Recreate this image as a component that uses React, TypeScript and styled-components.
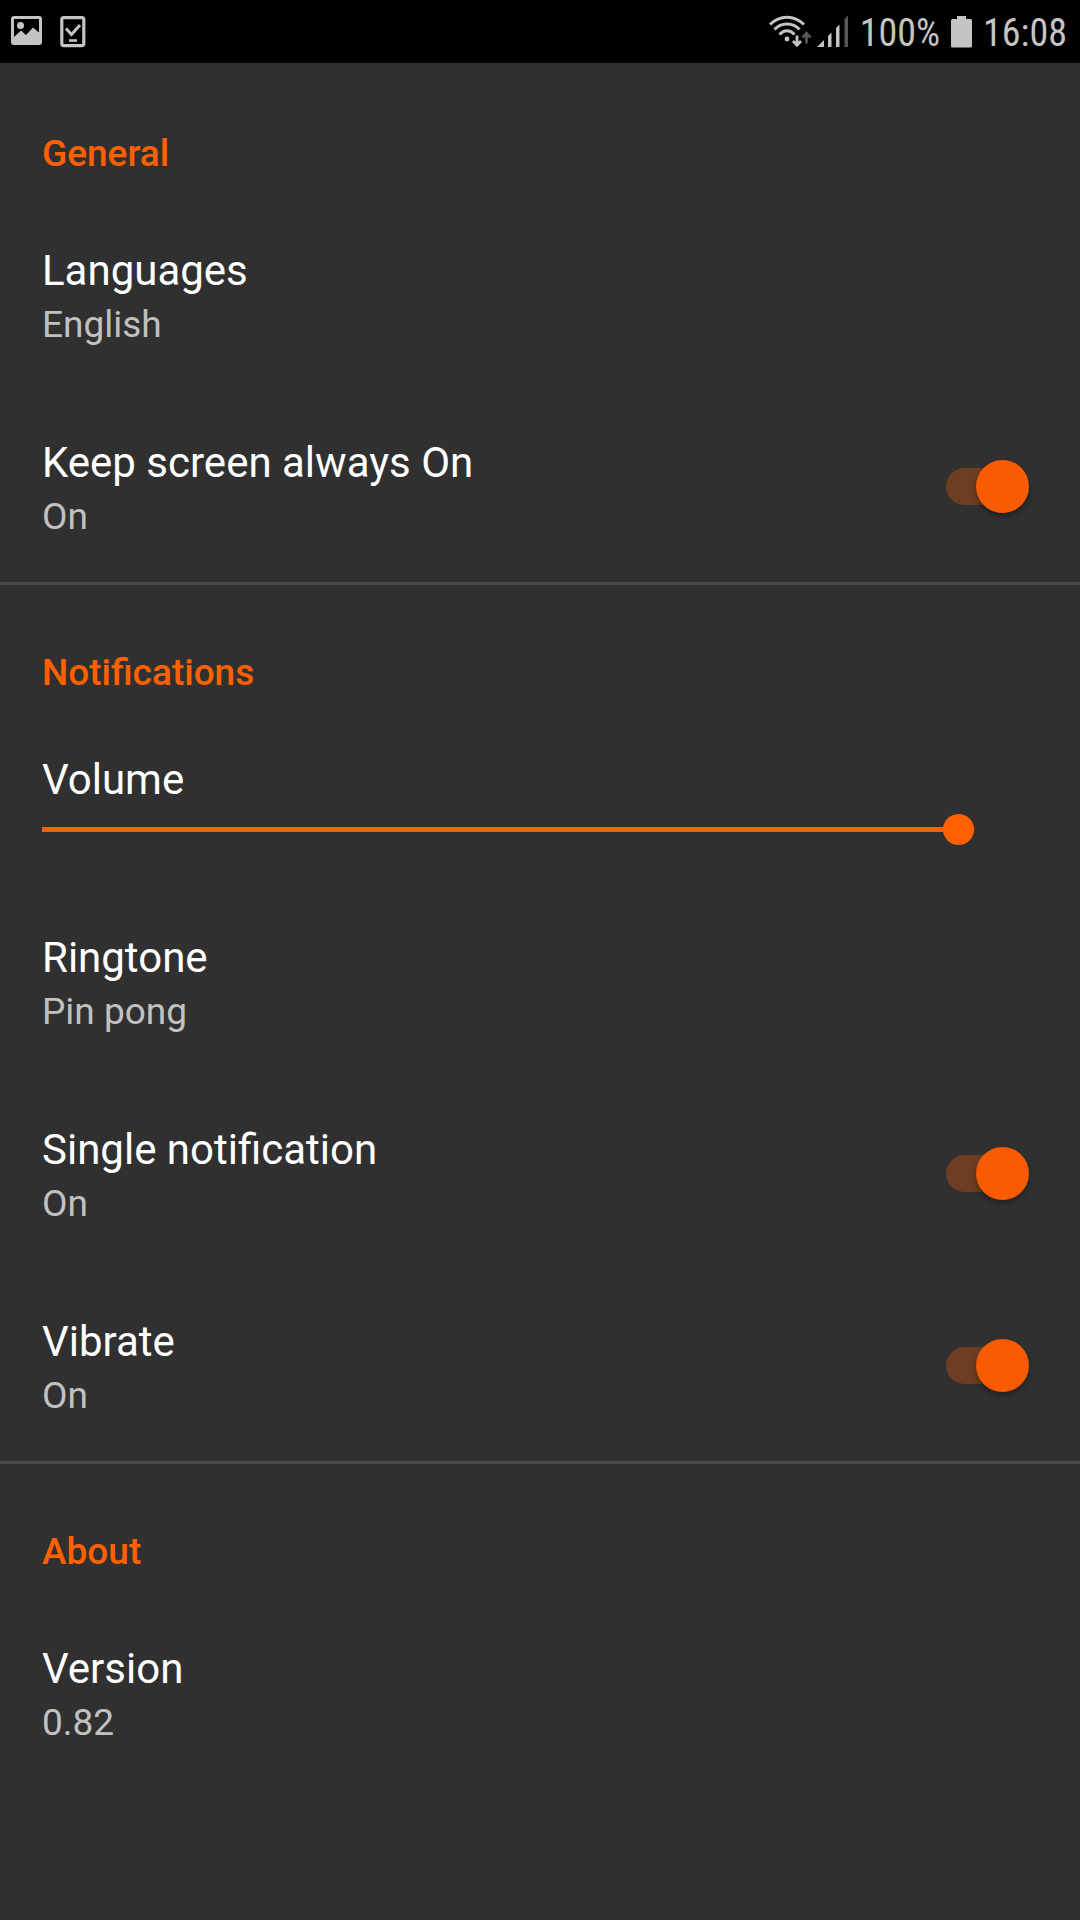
import React, { useId, useState } from "react";
import styled, { createGlobalStyle } from "styled-components";

const accent = "#ff6000";
const statusGrey = "#c4c4c4";

const GlobalStyle = createGlobalStyle`
  *, *::before, *::after { box-sizing: border-box; }
  body {
    margin: 0;
    background: #303030;
    color: #ffffff;
    font-family: Roboto, "Noto Sans", sans-serif;
  }
`;

const Page = styled.div`
  display: flex;
  flex-direction: column;
  min-height: 100vh;
  background: #303030;
`;

const StatusBar = styled.header`
  display: flex;
  align-items: center;
  justify-content: space-between;
  height: 63px;
  padding: 0 13px 0 10px;
  background: #000000;
  color: ${statusGrey};
`;

const StatusGroup = styled.div<{ $gap: number }>`
  display: flex;
  align-items: center;
  gap: ${(p) => p.$gap}px;

  svg { display: block; flex: none; }
`;

const StatusText = styled.span`
  padding-top: 2px;
  font-family: "Roboto Condensed", Roboto, sans-serif;
  font-size: 38px;
  line-height: 48px;
  white-space: nowrap;
`;

const Section = styled.section<{ $divided?: boolean }>`
  border-top: 3px solid ${(p) => (p.$divided ? "#4a4a4a" : "transparent")};
`;

const SectionTitle = styled.h2`
  margin: 0;
  padding: 64px 42px 20px;
  color: ${accent};
  font-size: 37px;
  font-weight: 500;
  line-height: 48px;
`;

const rowBase = `
  display: flex;
  width: 100%;
  border: 0;
  background: transparent;
  color: inherit;
  font: inherit;
  text-align: left;
`;

const RowButton = styled.button`
  ${rowBase}
  padding: 41px 42px;
`;

const SwitchRow = styled.label`
  ${rowBase}
  align-items: center;
  justify-content: space-between;
  padding: 41px 51px 41px 42px;
`;

const InfoRow = styled.div`
  ${rowBase}
  padding: 41px 42px;
`;

const SliderRow = styled.div`
  ${rowBase}
  flex-direction: column;
  gap: 8px;
  padding: 37px 106px 40px 42px;
`;

const RowText = styled.span`
  display: flex;
  flex-direction: column;
  gap: 4px;
  padding-top: 6px;
`;

const Title = styled.span`
  font-size: 42px;
  line-height: 52px;
`;

const Summary = styled.span`
  color: #c1c1c1;
  font-size: 37px;
  line-height: 48px;
`;

const Switch = styled.input`
  appearance: none;
  display: grid;
  align-items: center;
  flex: none;
  width: 83px;
  height: 53px;
  margin: 0;

  &::before, &::after {
    content: "";
    grid-area: 1 / 1;
  }
  &::before {
    width: 74px;
    height: 37px;
    border-radius: 19px;
    background: #6c6c6c;
  }
  &::after {
    width: 53px;
    height: 53px;
    border-radius: 50%;
    background: #bdbdbd;
    box-shadow: 0 3px 5px rgba(0, 0, 0, 0.35);
  }
  &:checked::before { background: #6d3e22; }
  &:checked::after {
    justify-self: end;
    background: #f95c00;
  }
`;

const Slider = styled.input<{ $percent: number }>`
  appearance: none;
  display: block;
  width: 100%;
  height: 31px;
  margin: 0;
  background: transparent;

  &::-webkit-slider-runnable-track {
    height: 5px;
    background: linear-gradient(
      to right,
      ${accent} ${(p) => p.$percent}%,
      #6c6c6c ${(p) => p.$percent}%
    );
  }
  &::-webkit-slider-thumb {
    appearance: none;
    width: 31px;
    height: 31px;
    margin-top: -13px;
    border-radius: 50%;
    background: ${accent};
  }
`;

function ImageIcon() {
  return (
    <svg width="32" height="32" viewBox="0 0 32 32" aria-hidden="true">
      <path
        fill="currentColor"
        fillRule="evenodd"
        d="M4 0h25a3 3 0 0 1 3 3v23a3 3 0 0 1-3 3H4a3 3 0 0 1-3-3V3a3 3 0 0 1 3-3ZM4 3v18l7-6.500 5 4.500 7-7.500 6 5V3Z"
      />
      <circle cx="10.500" cy="9.500" r="3.500" fill="currentColor" />
    </svg>
  );
}

function DeviceCheckIcon() {
  return (
    <svg width="26" height="32" viewBox="0 0 26 32" fill="none" stroke="currentColor" aria-hidden="true">
      <rect x="1.800" y="1.600" width="22" height="28" rx="2" strokeWidth="3.200" />
      <path d="M6 12.500l5.500 6L20 9" strokeWidth="3" />
      <path d="M9 24.500h8" strokeWidth="2.600" />
    </svg>
  );
}

function WifiIcon() {
  return (
    <svg width="44" height="34" viewBox="0 0 44 34" fill="none" stroke="currentColor" aria-hidden="true">
      <path d="M2 9.500C12 -.3 26 -.3 36 9.500" strokeWidth="3" />
      <path d="M6.500 14.500C13 7 25 7 31.500 14.500" strokeWidth="3" />
      <path d="M11.500 19.500C16 14.500 22 14.500 26.500 19.500" strokeWidth="3" />
      <circle cx="19" cy="24" r="2.400" fill="currentColor" stroke="none" />
      <path d="M29 20.500v9M25 26l4 4.200 4-4.200" strokeWidth="2.800" />
      <path d="M38.500 28.500V18.500M34.500 22.500l4-4.200 4 4.200" stroke="#555555" strokeWidth="2.800" />
    </svg>
  );
}

function SignalIcon() {
  return (
    <svg width="32" height="34" viewBox="0 0 32 34" fill="currentColor" aria-hidden="true">
      <path d="M0 32l7-7v7Z" />
      <path d="M11 21l3.500-3.500V32H11Z" />
      <path d="M19 13l3.500-3.500V32H19Z" />
      <path d="M27.500 4L31 .5V32h-3.500Z" fill="#555555" />
    </svg>
  );
}

function BatteryIcon() {
  return (
    <svg width="21" height="32" viewBox="0 0 21 32" fill="currentColor" aria-hidden="true">
      <path d="M6 0h9v3h4.500A1.500 1.500 0 0 1 21 4.500V30a1.500 1.500 0 0 1-1.500 1.500h-18A1.500 1.500 0 0 1 0 30V4.500A1.500 1.500 0 0 1 1.500 3H6Z" />
    </svg>
  );
}

function Labels({ title, summary }: { title: string; summary: string }) {
  return (
    <RowText>
      <Title>{title}</Title>
      <Summary>{summary}</Summary>
    </RowText>
  );
}

function SwitchSetting({ title }: { title: string }) {
  const [on, setOn] = useState(true);
  const id = useId();
  return (
    <SwitchRow htmlFor={id}>
      <Labels title={title} summary={on ? "On" : "Off"} />
      <Switch id={id} type="checkbox" role="switch" checked={on} onChange={(e) => setOn(e.target.checked)} />
    </SwitchRow>
  );
}

function SliderSetting({ title }: { title: string }) {
  const [value, setValue] = useState(100);
  const id = useId();
  return (
    <SliderRow>
      <Title as="label" htmlFor={id}>{title}</Title>
      <Slider
        id={id}
        type="range"
        min={0}
        max={100}
        value={value}
        $percent={value}
        onChange={(e) => setValue(Number(e.target.value))}
      />
    </SliderRow>
  );
}

export default function App() {
  return (
    <Page>
      <GlobalStyle />
      <StatusBar>
        <StatusGroup $gap={18}>
          <ImageIcon />
          <DeviceCheckIcon />
        </StatusGroup>
        <StatusGroup $gap={11}>
          <StatusGroup $gap={5}>
            <WifiIcon />
            <SignalIcon />
          </StatusGroup>
          <StatusText>100%</StatusText>
          <BatteryIcon />
          <StatusText>16:08</StatusText>
        </StatusGroup>
      </StatusBar>
      <main>
        <Section>
          <SectionTitle>General</SectionTitle>
          <RowButton type="button">
            <Labels title="Languages" summary="English" />
          </RowButton>
          <SwitchSetting title="Keep screen always On" />
        </Section>
        <Section $divided>
          <SectionTitle>Notifications</SectionTitle>
          <SliderSetting title="Volume" />
          <RowButton type="button">
            <Labels title="Ringtone" summary="Pin pong" />
          </RowButton>
          <SwitchSetting title="Single notification" />
          <SwitchSetting title="Vibrate" />
        </Section>
        <Section $divided>
          <SectionTitle>About</SectionTitle>
          <InfoRow>
            <Labels title="Version" summary="0.82" />
          </InfoRow>
        </Section>
      </main>
    </Page>
  );
}
